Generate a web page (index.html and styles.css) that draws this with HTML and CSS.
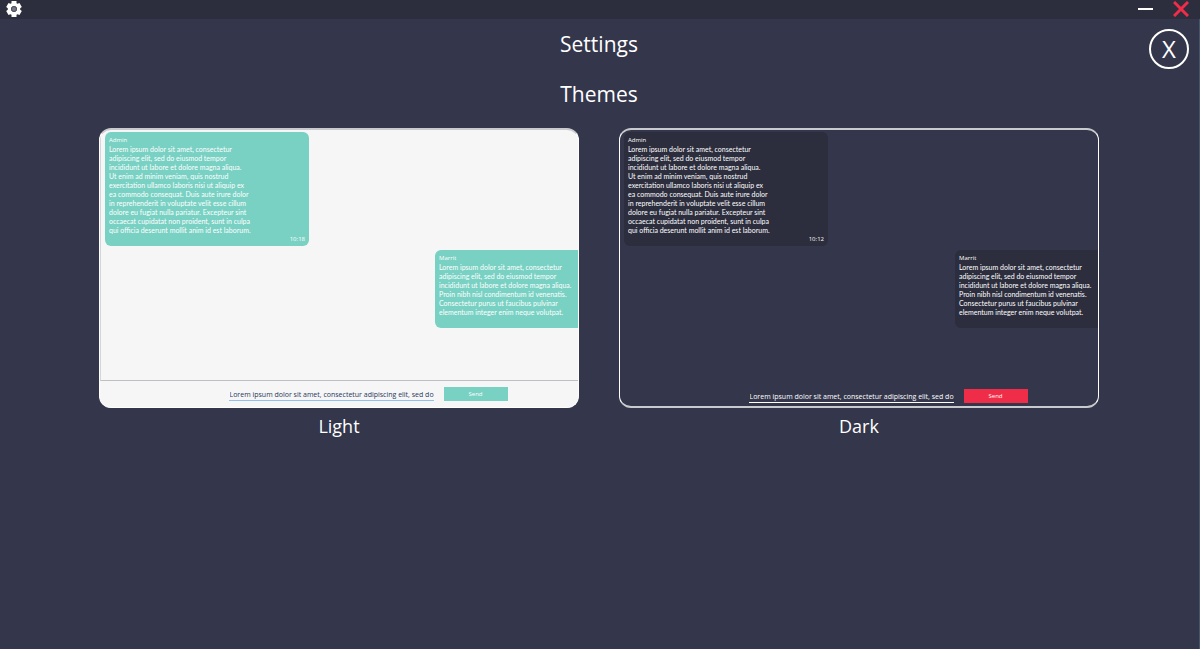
FILE: index.html
```html
<!DOCTYPE html>
<html lang="en">
<head>
<meta charset="utf-8">
<title>Settings</title>
<link rel="stylesheet" href="styles.css">
</head>
<body>
<header class="titlebar">
  <button class="bar-button" aria-label="Settings">
    <svg width="16" height="16" viewBox="0 0 16 16"><path fill="#fff" fill-rule="evenodd" d="M5.500 0h5v2.200l1 .6 2-.8 2.300 4-1.600 1.200v1.600l1.600 1.200-2.300 4-2-.8-1 .6V16h-5v-2.200l-1-.6-2 .8-2.300-4 1.600-1.200V7.200L.2 6l2.300-4 2 .8 1-.6zM8 5.200a2.800 2.800 0 1 0 0 5.600 2.800 2.800 0 0 0 0-5.600z"/><circle cx="8" cy="8" r="2.800" fill="#777985"/><circle cx="8" cy="8" r="2.500" fill="none" stroke="#4b4d5c"/></svg>
  </button>
  <div class="window-controls">
    <button class="bar-button" aria-label="Minimize">
      <svg width="16" height="16" viewBox="0 0 16 16"><path d="M0 8h15" stroke="#fff" stroke-width="2"/></svg>
    </button>
    <button class="bar-button" aria-label="Close window">
      <svg width="16" height="16" viewBox="0 0 16 16"><path d="M1 1l14 14M15 1L1 15" stroke="#f02d48" stroke-width="3"/></svg>
    </button>
  </div>
</header>
<main class="settings">
  <button class="close" aria-label="Close settings">X</button>
  <h1 class="heading">Settings</h1>
  <h2 class="heading">Themes</h2>
  <div class="themes">
    <figure class="theme">
      <div class="preview light">
        <div class="messages">
          <section class="bubble received">
            <h3 class="sender">Admin</h3>
            <p class="text">Lorem ipsum dolor sit amet, consectetur<br>adipiscing elit, sed do eiusmod tempor<br>incididunt ut labore et dolore magna aliqua.<br>Ut enim ad minim veniam, quis nostrud<br>exercitation ullamco laboris nisi ut aliquip ex<br>ea commodo consequat. Duis aute irure dolor<br>in reprehenderit in voluptate velit esse cillum<br>dolore eu fugiat nulla pariatur. Excepteur sint<br>occaecat cupidatat non proident, sunt in culpa<br>qui officia deserunt mollit anim id est laborum.</p>
            <time class="time">10:18</time>
          </section>
          <section class="bubble sent">
            <h3 class="sender">Marrit</h3>
            <p class="text">Lorem ipsum dolor sit amet, consectetur<br>adipiscing elit, sed do eiusmod tempor<br>incididunt ut labore et dolore magna aliqua.<br>Proin nibh nisl condimentum id venenatis.<br>Consectetur purus ut faucibus pulvinar<br>elementum integer enim neque volutpat.</p>
          </section>
        </div>
        <div class="composer">
          <input class="field" type="text" aria-label="Message, light theme" value="Lorem ipsum dolor sit amet, consectetur adipiscing elit, sed do eiusmod" readonly>
          <button class="send">Send</button>
        </div>
      </div>
      <figcaption class="name">Light</figcaption>
    </figure>
    <figure class="theme">
      <div class="preview dark">
        <div class="messages">
          <section class="bubble received">
            <h3 class="sender">Admin</h3>
            <p class="text">Lorem ipsum dolor sit amet, consectetur<br>adipiscing elit, sed do eiusmod tempor<br>incididunt ut labore et dolore magna aliqua.<br>Ut enim ad minim veniam, quis nostrud<br>exercitation ullamco laboris nisi ut aliquip ex<br>ea commodo consequat. Duis aute irure dolor<br>in reprehenderit in voluptate velit esse cillum<br>dolore eu fugiat nulla pariatur. Excepteur sint<br>occaecat cupidatat non proident, sunt in culpa<br>qui officia deserunt mollit anim id est laborum.</p>
            <time class="time">10:12</time>
          </section>
          <section class="bubble sent">
            <h3 class="sender">Marrit</h3>
            <p class="text">Lorem ipsum dolor sit amet, consectetur<br>adipiscing elit, sed do eiusmod tempor<br>incididunt ut labore et dolore magna aliqua.<br>Proin nibh nisl condimentum id venenatis.<br>Consectetur purus ut faucibus pulvinar<br>elementum integer enim neque volutpat.</p>
          </section>
        </div>
        <div class="composer">
          <input class="field" type="text" aria-label="Message, dark theme" value="Lorem ipsum dolor sit amet, consectetur adipiscing elit, sed do eiusmod" readonly>
          <button class="send">Send</button>
        </div>
      </div>
      <figcaption class="name">Dark</figcaption>
    </figure>
  </div>
</main>
</body>
</html>
```

FILE: styles.css
```css
* { box-sizing: border-box; }

body {
  display: flex;
  flex-direction: column;
  margin: 0;
  min-height: 100vh;
  background: #34364b;
  color: #fff;
  font-family: "Open Sans", "Noto Sans", sans-serif;
}

button, input { font-family: inherit; }

h1, h2, h3, p, figure { margin: 0; }

.titlebar {
  display: flex;
  justify-content: space-between;
  align-items: flex-start;
  height: 19px;
  padding: 1px 11px 0 6px;
  background: #2c2d3d;
}

.window-controls { display: flex; gap: 19px; }

.bar-button {
  display: flex;
  padding: 0;
  border: 0;
  background: none;
}

.settings {
  position: relative;
  flex: 1;
  padding-right: 1px;
  border-right: 1px solid #43566e;
}

.heading {
  font-size: 21px;
  font-weight: 400;
  line-height: 50px;
  text-align: center;
}

.close {
  position: absolute;
  top: 10px;
  right: 10px;
  width: 40px;
  height: 40px;
  padding: 0;
  border: 2px solid #fff;
  border-radius: 50%;
  background: none;
  color: #fff;
  font-size: 24px;
  line-height: 36px;
}

.themes {
  display: flex;
  justify-content: center;
  gap: 40px;
  padding: 9px 20px 20px;
}

.theme { flex: 0 1 480px; min-width: 0; }

.preview {
  display: flex;
  flex-direction: column;
  height: 280px;
  border: 1px solid #fff;
  border-top: 2px solid #c9cace;
  border-radius: 12px;
  overflow: hidden;
}

.messages {
  display: flex;
  flex: 1;
  flex-direction: column;
  align-items: flex-start;
  gap: 4px;
  padding: 2px 0 0 4px;
}

.bubble {
  display: flex;
  flex-direction: column;
  padding: 4px;
  border-radius: 6px;
}

.received { width: 204px; height: 114px; }

.sent {
  align-self: flex-end;
  width: 143px;
  height: 78px;
  border-radius: 6px 0 0 6px;
}

.sender {
  font-size: 6px;
  font-weight: 400;
  line-height: 8px;
}

.text {
  padding-top: 1px;
  font-family: Lato, "Open Sans", sans-serif;
  font-size: 7px;
  line-height: 9px;
  white-space: nowrap;
}

.time {
  align-self: flex-end;
  padding-top: 1px;
  font-size: 6px;
  line-height: 6px;
}

.composer {
  display: flex;
  justify-content: center;
  gap: 10px;
  padding: 6px 0 6px 58px;
}

.field {
  width: 205px;
  height: 14px;
  padding: 2px 0 0 1px;
  border: 0;
  border-bottom: 1px solid #fff;
  background: none;
  color: inherit;
  font-size: 7px;
  outline: 0;
}

.send {
  width: 64px;
  height: 14px;
  padding: 0;
  border: 0;
  color: #fff;
  font-size: 6px;
  line-height: 14px;
}

.light { background: #f6f6f6; }
.light .messages { border-bottom: 1px solid #bfc0c4; border-left: 1px solid #d5d6d9; }
.light .bubble, .light .send { background: #79d1c3; }
.light .field { border-color: #92bfee; color: #26385c; }

.dark { border-bottom: 2px solid #c9cace; }
.dark .bubble { background: #2c2d3d; }
.dark .send { background: #f02d48; }
.dark .composer { padding-bottom: 3px; }

.name {
  padding-top: 3px;
  font-size: 18px;
  line-height: 30px;
  text-align: center;
}
```
